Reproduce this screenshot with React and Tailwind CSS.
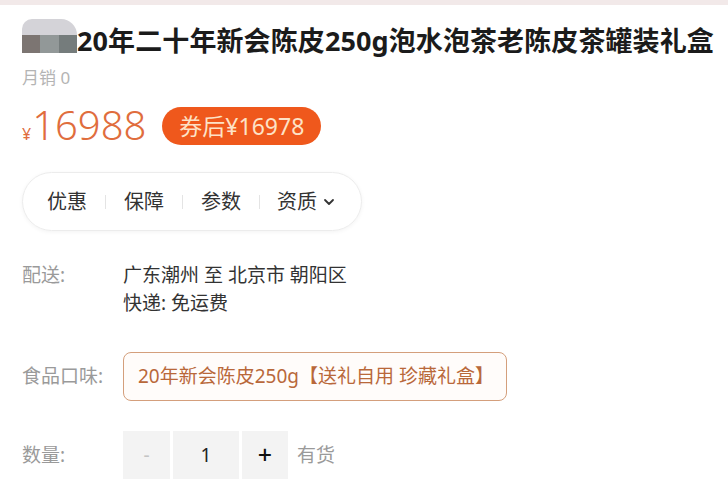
import React from "react";

export default function App() {
  return (
    <div className="w-[728px] h-[496px] bg-white overflow-hidden font-['Noto_Sans','Noto_Sans_CJK_SC',sans-serif]">
      <div className="h-[5px] bg-[#f2e9e9]" />
      <div className="pl-[22px]">
        {/* title */}
        <div className="mt-[14px] flex items-start">
          <div className="w-[55px] h-[34px] flex flex-col shrink-0">
            <div className="h-[16px] bg-[#d4d3d8] rounded-tl-[10px] rounded-tr-[16px]" />
            <div className="flex-1 flex">
              <div className="flex-1 bg-[#7c7572]" />
              <div className="flex-1 bg-[#929898]" />
              <div className="flex-1 bg-[#757c7c]" />
            </div>
          </div>
          <div className="mt-[5px] text-[27px] leading-[34px] font-bold text-[#1b1b1b] whitespace-nowrap tracking-[0.1px]">
            20年二十年新会陈皮250g泡水泡茶老陈皮茶罐装礼盒
          </div>
        </div>
        {/* monthly sales */}
        <div className="mt-[10px] text-[17px] leading-[20px] text-[#b4b4b4]">月销 0</div>
        {/* price */}
        <div className="mt-[19px] h-[38px] flex items-center">
          <div className="flex items-baseline text-[#e06d3d]">
            <span className="text-[16px] mr-[1px]">¥</span>
            <span className="text-[40px] leading-[38px] font-light">16988</span>
          </div>
          <div className="ml-[16px] h-[38px] px-[17px] rounded-full bg-[#ef581c] flex items-center text-[23px] text-[#fde2c6] leading-none">
            券后¥16978
          </div>
        </div>
        {/* tabs */}
        <div className="mt-[27px] w-[340px] h-[59px] rounded-[30px] border border-[#ececec] shadow-[0_1px_4px_rgba(0,0,0,0.05)] flex items-center pl-[6px] text-[20px] text-[#333]">
          <div className="px-[18px]">优惠</div>
          <div className="w-px h-[14px] bg-[#e4e4e4]" />
          <div className="px-[18px]">保障</div>
          <div className="w-px h-[14px] bg-[#e4e4e4]" />
          <div className="px-[18px]">参数</div>
          <div className="w-px h-[14px] bg-[#e4e4e4]" />
          <div className="pl-[17px] flex items-center">
            资质
            <svg width="12" height="8" viewBox="0 0 12 8" className="ml-[6px]">
              <path d="M2 2 L6 6 L10 2" fill="none" stroke="#333" strokeWidth="1.8" strokeLinecap="round" strokeLinejoin="round" />
            </svg>
          </div>
        </div>
        {/* delivery */}
        <div className="mt-[30px] flex text-[19px] leading-[28px]">
          <div className="w-[101px] text-[#9a9a9a]">配送:</div>
          <div className="text-[#333]">
            <div>广东潮州 至 北京市 朝阳区</div>
            <div>快递: 免运费</div>
          </div>
        </div>
        {/* flavor */}
        <div className="mt-[35px] flex items-center text-[19px]">
          <div className="w-[101px] text-[#9a9a9a]">食品口味:</div>
          <div className="h-[49px] w-[384px] border-[1.5px] border-[#d49f7c] rounded-[8px] bg-[#fffcfa] flex items-center pl-[14px] text-[#b9683a] whitespace-nowrap">
            20年新会陈皮250g【送礼自用 珍藏礼盒】
          </div>
        </div>
        {/* quantity */}
        <div className="mt-[30px] flex items-center text-[19px]">
          <div className="w-[101px] text-[#9a9a9a]">数量:</div>
          <div className="flex h-[48px] gap-[3px]">
            <div className="w-[47px] bg-[#f3f3f3] flex items-center justify-center text-[#c4c4c4]">-</div>
            <div className="w-[66px] bg-[#f3f3f3] flex items-center justify-center text-[#222]">1</div>
            <div className="w-[46px] bg-[#f3f3f3] flex items-center justify-center text-[#111] text-[25px] font-medium">+</div>
          </div>
          <div className="ml-[9px] text-[#9a9a9a]">有货</div>
        </div>
      </div>
    </div>
  );
}
